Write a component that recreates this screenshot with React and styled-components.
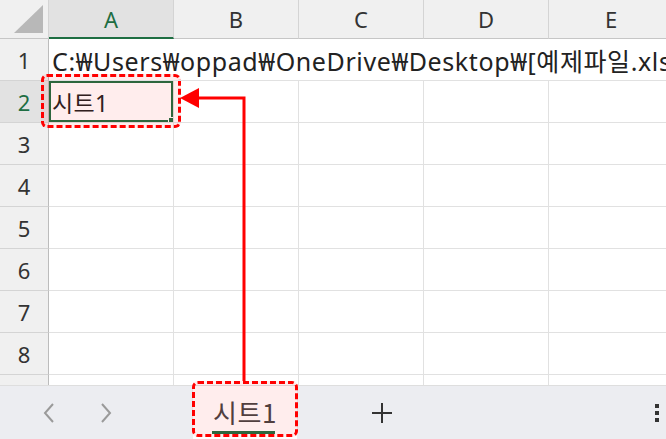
import React from 'react'
import styled, { createGlobalStyle } from 'styled-components'

const COLS = ['A', 'B', 'C', 'D', 'E']
const ROWS = [1, 2, 3, 4, 5, 6, 7, 8, 9]
const PATH = 'C:₩Users₩oppad₩OneDrive₩Desktop₩[예제파일.xlsx]시트1'

const GREEN = '#1e6e42'
const RED = '#ff0000'

const Global = createGlobalStyle`
  html, body {
    margin: 0;
    padding: 0;
    background: #fff;
  }
  body {
    font-family: 'Noto Sans', 'Noto Sans CJK KR', sans-serif;
    width: 666px;
    height: 439px;
    overflow: hidden;
  }
`

const Page = styled.div`
  position: relative;
  width: 666px;
  height: 439px;
  display: flex;
  flex-direction: column;
  overflow: hidden;
`

const Sheet = styled.div`
  height: 385px;
  overflow: hidden;
  flex: none;
`

const Grid = styled.div`
  display: grid;
  grid-template-columns: 49px repeat(5, 125px);
  grid-template-rows: 39px;
  grid-auto-rows: 42px;
  width: 800px;
`

const Corner = styled.div`
  position: relative;
  background: #f0f0f0;
  border-right: 1px solid #d4d4d4;
  border-bottom: 1px solid #c6c6c6;

  &::after {
    content: '';
    position: absolute;
    right: 5px;
    bottom: 5px;
    width: 0;
    height: 0;
    border-left: 29px solid transparent;
    border-bottom: 28px solid #b8b8b8;
  }
`

const ColHead = styled.div`
  display: flex;
  align-items: center;
  justify-content: center;
  font-size: 22px;
  background: ${(p) => (p.$active ? '#e2e2e2' : '#f0f0f0')};
  color: ${(p) => (p.$active ? GREEN : '#333')};
  border-right: 1px solid #d4d4d4;
  border-bottom: ${(p) => (p.$active ? `2px solid ${GREEN}` : '1px solid #c6c6c6')};
`

const RowHead = styled.div`
  display: flex;
  align-items: center;
  justify-content: center;
  font-size: 22px;
  background: ${(p) => (p.$active ? '#e2e2e2' : '#f0f0f0')};
  color: ${(p) => (p.$active ? GREEN : '#333')};
  border-right: 1px solid #bcbcbc;
  border-bottom: 1px solid #d4d4d4;
`

const Cell = styled.div`
  position: relative;
  display: flex;
  align-items: center;
  padding-left: 3px;
  font-size: ${(p) => (p.$spill ? '25px' : '23px')};
  letter-spacing: ${(p) => (p.$spill ? '0.6px' : '0.4px')};
  color: #222;
  white-space: nowrap;
  overflow: ${(p) => (p.$spill ? 'visible' : 'hidden')};
  z-index: ${(p) => (p.$spill ? 1 : 0)};
  border-right: ${(p) => (p.$spill ? 'none' : '1px solid #e1e1e1')};
  border-bottom: 1px solid #e1e1e1;
  ${(p) =>
    p.$selected &&
    `
    box-shadow: inset 0 0 0 2px ${GREEN};
    &::after {
      content: '';
      position: absolute;
      right: -2px;
      bottom: -2px;
      width: 5px;
      height: 5px;
      background: ${GREEN};
      border: 1px solid #fff;
    }
  `}
`

const TabBar = styled.div`
  flex: 1;
  display: flex;
  align-items: center;
  background: #ecedf1;
  border-top: 1px solid #dedede;
`

const NavArrow = styled.div`
  width: 57px;
  display: flex;
  justify-content: center;
  color: #9a9a9a;
  margin-left: ${(p) => (p.$first ? '20px' : '0')};
`

const Tab = styled.div`
  margin-left: 59px;
  width: 104px;
  height: 100%;
  display: flex;
  align-items: center;
  justify-content: center;
  position: relative;
  background: #fff;
  font-size: 26px;
  letter-spacing: 0.5px;
  color: #444;
  font-family: 'Noto Sans CJK KR', sans-serif;
  padding-bottom: 2px;
  box-sizing: border-box;

  &::after {
    content: '';
    position: absolute;
    left: 19px;
    right: 22px;
    bottom: 5px;
    height: 3px;
    background: ${GREEN};
  }
`

const AddBtn = styled.div`
  margin-left: 74px;
  display: flex;
  color: #333;
`

const MoreBtn = styled.div`
  margin-left: auto;
  margin-right: 7px;
  display: flex;
  flex-direction: column;
  gap: 3px;

  span {
    width: 4px;
    height: 4px;
    background: #333;
  }
`

const Callout = styled.div`
  position: absolute;
  left: ${(p) => p.$x}px;
  top: ${(p) => p.$y}px;
  width: ${(p) => p.$w}px;
  height: ${(p) => p.$h}px;
  border: 3px dashed ${RED};
  border-radius: 6px;
  background: rgba(255, 0, 0, 0.07);
  box-sizing: border-box;
  pointer-events: none;
`

const Overlay = styled.svg`
  position: absolute;
  left: 0;
  top: 0;
  pointer-events: none;
`

function Chevron({ dir }) {
  return (
    <svg width="14" height="24" viewBox="0 0 14 24">
      <path
        d={dir === 'left' ? 'M11 3 L3 12 L11 21' : 'M3 3 L11 12 L3 21'}
        fill="none"
        stroke="currentColor"
        strokeWidth="2"
      />
    </svg>
  )
}

export default function App() {
  return (
    <Page>
      <Global />
      <Sheet>
        <Grid>
          <Corner />
          {COLS.map((c) => (
            <ColHead key={c} $active={c === 'A'}>
              {c}
            </ColHead>
          ))}
          {ROWS.map((r) => (
            <React.Fragment key={r}>
              <RowHead $active={r === 2}>{r}</RowHead>
              {COLS.map((c) => (
                <Cell key={c} $spill={r === 1} $selected={r === 2 && c === 'A'}>
                  {r === 1 && c === 'A' ? PATH : r === 2 && c === 'A' ? '시트1' : ''}
                </Cell>
              ))}
            </React.Fragment>
          ))}
        </Grid>
      </Sheet>
      <TabBar>
        <NavArrow $first>
          <Chevron dir="left" />
        </NavArrow>
        <NavArrow>
          <Chevron dir="right" />
        </NavArrow>
        <Tab>시트1</Tab>
        <AddBtn>
          <svg width="22" height="22" viewBox="0 0 22 22">
            <path d="M11 1 V21 M1 11 H21" stroke="currentColor" strokeWidth="2" />
          </svg>
        </AddBtn>
        <MoreBtn>
          <span />
          <span />
          <span />
        </MoreBtn>
      </TabBar>

      <Callout $x={41} $y={74} $w={140} $h={54} />
      <Callout $x={192} $y={381} $w={106} $h={56} />
      <Overlay width="666" height="439">
        <path d="M244 381 V98 H196" fill="none" stroke={RED} strokeWidth="3" />
        <polygon points="180,98 199,88 199,108" fill={RED} />
      </Overlay>
    </Page>
  )
}
